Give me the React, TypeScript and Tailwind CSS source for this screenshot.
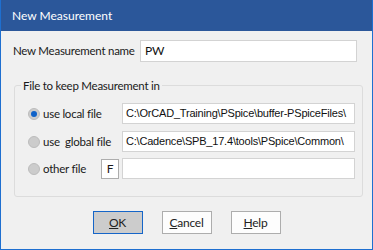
import React from "react";

const ui = { fontFamily: '"Segoe UI", "Lato", "Liberation Sans", sans-serif' };
const mono = { fontFamily: '"Liberation Sans", Arial, sans-serif' };

function Radio({ checked }: { checked?: boolean }) {
    return (
        <span className="w-[12px] h-[12px] rounded-full bg-[#cccccc] border border-[#bcbcbc] flex items-center justify-center shrink-0">
            {checked && <span className="w-[6px] h-[6px] rounded-full bg-[#0f62c9]" />}
        </span>
    );
}

function Field({ value, w }: { value?: string; w: string }) {
    return (
        <div
            className={`${w} h-[21px] bg-white border border-[#d3d3d3] flex items-center px-[3px] overflow-hidden whitespace-nowrap text-[11px] tracking-[-0.2px] text-[#111]`}
            style={mono}
        >
            {value}
        </div>
    );
}

function Btn({ children, active }: { children: React.ReactNode; active?: boolean }) {
    return (
        <button
            className={
                active
                    ? "w-[50px] h-[23px] bg-[#cccccc] border border-[#1565c8] text-[12px] text-[#222]"
                    : "w-[50px] h-[23px] bg-[#fdfdfd] border border-[#adadad] text-[12px] text-[#222]"
            }
            style={ui}
        >
            {children}
        </button>
    );
}

export default function App() {
    return (
        <div className="w-[373px] h-[250px] bg-[#1e6fd0] p-[1px] pt-0 tracking-[-0.25px]" style={ui}>
            <div className="w-full h-full flex flex-col bg-[#f0f0f0]">
                <div className="h-[31px] bg-[#2b579a] flex items-center pl-[11px] text-[12px] text-white shrink-0 tracking-normal">
                    New Measurement
                </div>

                <div className="flex items-center mt-[9px] pl-[12px] h-[22px]">
                    <span className="w-[127px] text-[11.5px] text-[#1a1a1a] whitespace-nowrap">New Measurement name</span>
                    <div className="w-[217px] h-[22px] bg-white border border-[#d3d3d3] flex items-center px-[4px] text-[12px] text-[#111]">
                        PW
                    </div>
                </div>

                <div className="relative ml-[13px] mt-[23px] w-[349px] h-[112px] border border-[#dcdcdc] rounded-[3px]">
                    <span className="absolute -top-[9px] left-[6px] px-[2px] bg-[#f0f0f0] text-[11.5px] text-[#1a1a1a] whitespace-nowrap">
                        File to keep Measurement in
                    </span>
                    <div className="flex flex-col gap-[6px] pt-[17px] pl-[13px] text-[11.5px] text-[#1a1a1a]">
                        <div className="flex items-center h-[21px]">
                            <Radio checked />
                            <span className="ml-[3px] w-[79px] whitespace-nowrap">use local file</span>
                            <Field w="w-[233px]" value="C:\OrCAD_Training\PSpice\buffer-PSpiceFiles\" />
                        </div>
                        <div className="flex items-center h-[21px] mt-[1px]">
                            <Radio />
                            <span className="ml-[3px] w-[79px] whitespace-pre">use  global file</span>
                            <Field w="w-[233px]" value="C:\Cadence\SPB_17.4\tools\PSpice\Common\" />
                        </div>
                        <div className="flex items-center h-[21px]">
                            <Radio />
                            <span className="ml-[3px] w-[58px] whitespace-nowrap">other file</span>
                            <div className="w-[18px] h-[20px] bg-white border border-[#adadad] flex items-center justify-center text-[12px] mr-[3px]">
                                F
                            </div>
                            <Field w="w-[233px]" />
                        </div>
                    </div>
                </div>

                <div className="flex justify-center gap-[19px] mt-[14px]">
                    <Btn active>
                        <u>O</u>K
                    </Btn>
                    <Btn>
                        <u>C</u>ancel
                    </Btn>
                    <Btn>
                        <u>H</u>elp
                    </Btn>
                </div>
            </div>
        </div>
    );
}
